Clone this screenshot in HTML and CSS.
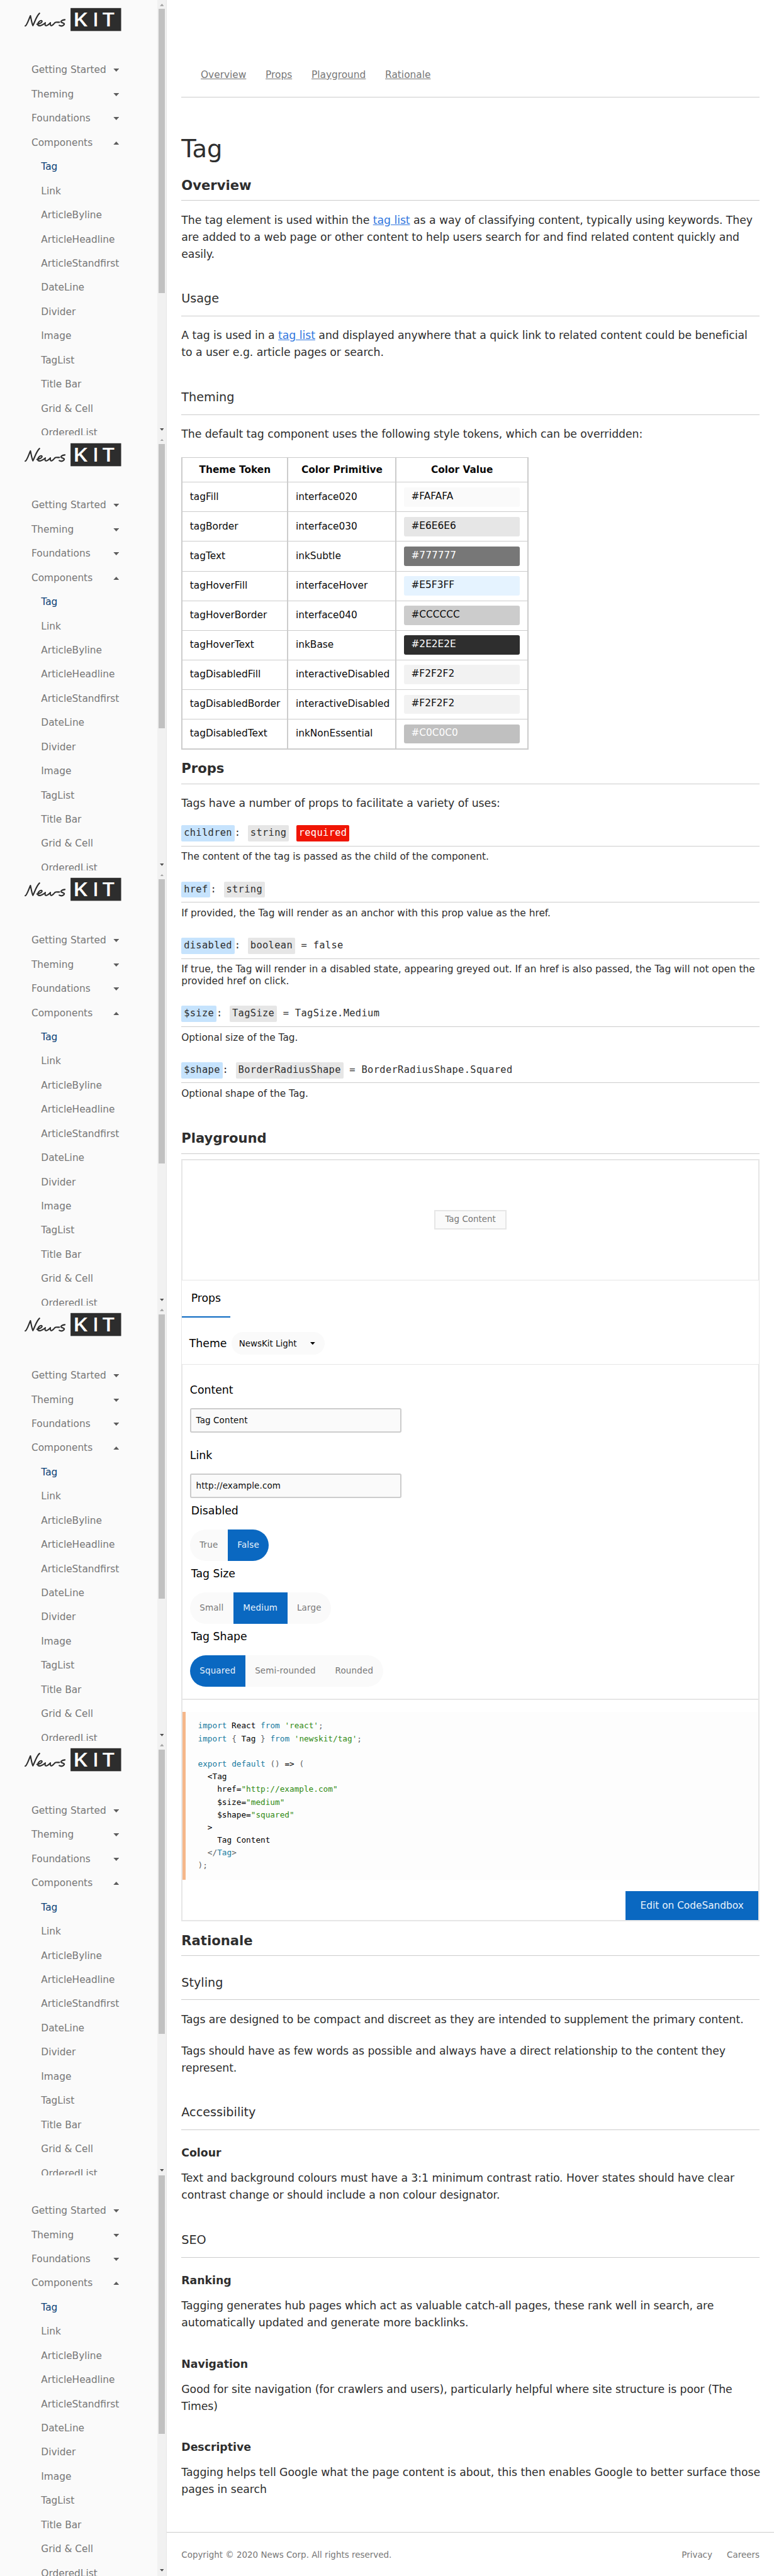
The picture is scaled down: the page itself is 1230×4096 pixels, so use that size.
FILE: index.html
```html
<!DOCTYPE html>
<html lang="en">
<head>
<meta charset="utf-8">
<title>Tag | NewsKit</title>
<link rel="stylesheet" href="styles.css">
</head>
<body>
<div class="page">
  <aside class="sidebar" id="sidebar"></aside>

  <div class="content">
    <main class="main">
      <nav class="anchors">
        <a>Overview</a><a>Props</a><a>Playground</a><a>Rationale</a>
      </nav>

      <h1 class="title">Tag</h1>

      <h2 class="h2 first">Overview</h2>
      <p class="para">The tag element is used within the <a class="link">tag list</a> as a way of classifying content, typically using keywords. They are added to a web page or other content to help users search for and find related content quickly and easily.</p>

      <h3 class="h3">Usage</h3>
      <p class="para">A tag is used in a <a class="link">tag list</a> and displayed anywhere that a quick link to related content could be beneficial to a user e.g. article pages or search.</p>

      <h3 class="h3">Theming</h3>
      <p class="para">The default tag component uses the following style tokens, which can be overridden:</p>

      <table class="tokens">
        <thead>
          <tr><th class="c1">Theme Token</th><th class="c2">Color Primitive</th><th class="c3">Color Value</th></tr>
        </thead>
        <tbody>
          <tr><td>tagFill</td><td>interface020</td><td><div class="swatch s-fafafa">#FAFAFA</div></td></tr>
          <tr><td>tagBorder</td><td>interface030</td><td><div class="swatch s-e6e6e6">#E6E6E6</div></td></tr>
          <tr><td>tagText</td><td>inkSubtle</td><td><div class="swatch s-777777">#777777</div></td></tr>
          <tr><td>tagHoverFill</td><td>interfaceHover</td><td><div class="swatch s-e5f3ff">#E5F3FF</div></td></tr>
          <tr><td>tagHoverBorder</td><td>interface040</td><td><div class="swatch s-cccccc">#CCCCCC</div></td></tr>
          <tr><td>tagHoverText</td><td>inkBase</td><td><div class="swatch s-2e2e2e">#2E2E2E</div></td></tr>
          <tr><td>tagDisabledFill</td><td>interactiveDisabled</td><td><div class="swatch s-f2f2f2">#F2F2F2</div></td></tr>
          <tr><td>tagDisabledBorder</td><td>interactiveDisabled</td><td><div class="swatch s-f2f2f2">#F2F2F2</div></td></tr>
          <tr><td>tagDisabledText</td><td>inkNonEssential</td><td><div class="swatch s-c0c0c0">#C0C0C0</div></td></tr>
        </tbody>
      </table>

      <h2 class="h2">Props</h2>
      <p class="para">Tags have a number of props to facilitate a variety of uses:</p>

      <div class="props">
        <section class="prop">
          <div class="prop-title"><span class="chip name">children</span>: <span class="chip type">string</span> <span class="chip required">required</span></div>
          <p class="desc">The content of the tag is passed as the child of the component.</p>
        </section>
        <section class="prop">
          <div class="prop-title"><span class="chip name">href</span>: <span class="chip type">string</span></div>
          <p class="desc">If provided, the Tag will render as an anchor with this prop value as the href.</p>
        </section>
        <section class="prop">
          <div class="prop-title"><span class="chip name">disabled</span>: <span class="chip type">boolean</span> = false</div>
          <p class="desc">If true, the Tag will render in a disabled state, appearing greyed out. If an href is also passed, the Tag will not open the provided href on click.</p>
        </section>
        <section class="prop">
          <div class="prop-title"><span class="chip name">$size</span>: <span class="chip type">TagSize</span> = TagSize.Medium</div>
          <p class="desc">Optional size of the Tag.</p>
        </section>
        <section class="prop">
          <div class="prop-title"><span class="chip name">$shape</span>: <span class="chip type">BorderRadiusShape</span> = BorderRadiusShape.Squared</div>
          <p class="desc">Optional shape of the Tag.</p>
        </section>
      </div>

      <h2 class="h2 after-props">Playground</h2>
      <div class="playground">
        <div class="stage"><span class="tag">Tag Content</span></div>
        <div class="controls">
          <div class="tab">Props</div>
          <div class="theme">
            <span class="label">Theme</span>
            <span class="select">NewsKit Light
              <svg class="caret" viewBox="0 0 8 4.5"><path d="M0 0h8L4 4.5z"/></svg>
            </span>
          </div>
        </div>
        <div class="form">
          <div class="label">Content</div>
          <div class="input">Tag Content</div>
          <div class="label second">Link</div>
          <div class="input">http://example.com</div>
          <div class="label inset">Disabled</div>
          <div class="group"><span class="opt">True</span><span class="opt on">False</span></div>
          <div class="label inset">Tag Size</div>
          <div class="group"><span class="opt">Small</span><span class="opt on">Medium</span><span class="opt">Large</span></div>
          <div class="label inset">Tag Shape</div>
          <div class="group"><span class="opt on">Squared</span><span class="opt">Semi-rounded</span><span class="opt">Rounded</span></div>
        </div>
        <div class="source">
<pre class="code"><span class="k">import</span> React <span class="k">from</span> <span class="s">'react'</span><span class="p">;</span>
<span class="k">import</span> <span class="p">{</span> Tag <span class="p">}</span> <span class="k">from</span> <span class="s">'newskit/tag'</span><span class="p">;</span>

<span class="k">export</span> <span class="k">default</span> <span class="p">()</span> =&gt; <span class="p">(</span>
  &lt;Tag
    href=<span class="s">"http://example.com"</span>
    $size=<span class="s">"medium"</span>
    $shape=<span class="s">"squared"</span>
  &gt;
    Tag Content
  <span class="p">&lt;/</span><span class="k">Tag</span><span class="p">&gt;</span>
<span class="p">);</span></pre>
          <div class="actions"><a class="button">Edit on CodeSandbox</a></div>
        </div>
      </div>

      <h2 class="h2">Rationale</h2>
      <h3 class="h3 close">Styling</h3>
      <p class="para">Tags are designed to be compact and discreet as they are intended to supplement the primary content.</p>
      <p class="para next">Tags should have as few words as possible and always have a direct relationship to the content they represent.</p>

      <h3 class="h3">Accessibility</h3>
      <h4 class="h4 close">Colour</h4>
      <p class="para sub">Text and background colours must have a 3:1 minimum contrast ratio. Hover states should have clear contrast change or should include a non colour designator.</p>

      <h3 class="h3">SEO</h3>
      <h4 class="h4 close">Ranking</h4>
      <p class="para sub">Tagging generates hub pages which act as valuable catch-all pages, these rank well in search, are automatically updated and generate more backlinks.</p>
      <h4 class="h4">Navigation</h4>
      <p class="para sub">Good for site navigation (for crawlers and users), particularly helpful where site structure is poor (The Times)</p>
      <h4 class="h4">Descriptive</h4>
      <p class="para sub wide">Tagging helps tell Google what the page content is about, this then enables Google to better surface those pages in search</p>
    </main>

    <footer class="footer">
      <span>Copyright © 2020 News Corp. All rights reserved.</span>
      <span class="footer-links"><a>Privacy</a><a>Careers</a></span>
    </footer>
  </div>
</div>
<script src="sidebar.js"></script>
</body>
</html>
```
FILE: styles.css
```css
* { box-sizing: border-box; }

:root {
  --thick: 2.6px;
  --rule: #cccccc;
  --edge: #e6e6e6;
  --ink: #2e2e2e;
  --subtle: #777777;
  --primary: #0a68c1;
}

html { overflow: hidden; }

body {
  margin: 0;
  zoom: 0.9609375;
  background: #fff;
  color: var(--ink);
  font-family: "DejaVu Sans", sans-serif;
  font-size: 16px;
}

h1, h2, h3, h4, p, pre { margin: 0; }

.page { display: flex; width: 1280px; height: 4262px; overflow: hidden; }

/* Sidebar */
.sidebar { width: 276px; flex: none; }
.pane {
  display: flex;
  height: 720px;
  overflow: hidden;
  background: #fafafa;
  border-right: 1px solid var(--edge);
}
.pane.tail { height: 662px; align-items: flex-end; }
.pane-nav { width: 260px; height: 720px; padding: 8px 0 0 34px; overflow: hidden; flex: none; }
.logo { display: block; width: 172px; height: 48px; margin-bottom: 40px; }
.logo text { font-family: "Open Sans", sans-serif; font-weight: 600; font-size: 98px; fill: #fff; }
.row {
  display: flex;
  align-items: center;
  justify-content: space-between;
  width: 144px;
  height: 40px;
  margin-left: 18px;
  color: var(--subtle);
  white-space: nowrap;
}
.row.child { margin-left: 34px; }
.row.active { color: #0a3f75; }
.row svg { width: 10px; height: 5.2px; fill: #5c5c5c; flex: none; margin-right: -1px; margin-top: 1px; }
.bar {
  display: flex;
  flex-direction: column;
  align-items: center;
  width: 15px;
  height: 720px;
  flex: none;
  padding: 6px 0;
  background: #f1f1f1;
}
.bar svg { width: 7px; height: 4px; }
.bar .up { fill: #a3a3a3; }
.bar .down { fill: #505050; margin-top: auto; margin-bottom: 1px; }
.thumb { width: 11px; height: 470px; margin-top: 5px; background: #c1c1c1; }

/* Main column */
.content { flex: 1; display: flex; flex-direction: column; }
.main { width: 980px; padding: 0 0 56px 24px; }
.main > * { width: 956px; }

.anchors {
  display: flex;
  gap: 32px;
  height: 161.4px;
  padding: 114px 0 0 32px;
  border-bottom: 1px solid var(--rule);
  color: var(--subtle);
  line-height: 20px;
}
.anchors a, .link { text-decoration: underline; }
.title { margin-top: 61px; font-weight: 400; font-size: 40px; line-height: 48px; }

.h2 {
  margin-top: 18px;
  padding-bottom: 10px;
  border-bottom: 1px solid var(--rule);
  font-size: 22px;
  line-height: 28px;
}
.h2.first { margin-top: 23px; }
.h2.after-props { margin-top: 50px; }
.h3 {
  margin-top: 46.6px;
  padding-bottom: 13.4px;
  border-bottom: 1px solid var(--rule);
  font-weight: 400;
  font-size: 20px;
  line-height: 28px;
}
.h3.close { margin-top: 30.6px; }
.h4 { margin-top: 40px; font-size: 18px; line-height: 28px; }
.h4.close { margin-top: 24px; }
.para { margin-top: 18px; font-size: 18px; line-height: 28px; letter-spacing: -0.055px; }
.para.next { margin-top: 24px; }
.para.sub { margin-top: 14px; }
.main > .para.wide { width: 966px; }
.link { color: #3277de; }

/* Token table */
.main > .tokens {
  width: 574px;
  margin-top: 24px;
  table-layout: fixed;
  border-spacing: 0;
  border-left: var(--thick) solid var(--rule);
  border-top: 1px solid var(--rule);
  border-bottom: 1px solid var(--rule);
  color: #0a0a0a;
}
.tokens th, .tokens td {
  padding: 0 12px;
  border-right: var(--thick) solid var(--rule);
  border-bottom: 1px solid var(--rule);
  text-align: left;
  line-height: 20px;
}
.tokens th { height: 41px; text-align: center; }
.tokens td { height: 49px; }
.c1 { width: 175px; }
.c2 { width: 179px; }
.c3 { width: 218px; }
.swatch { height: 32px; padding: 5px 12px 7px; border-radius: 3px; }
.s-fafafa { background: #fafafa; }
.s-e6e6e6 { background: #e6e6e6; }
.s-777777 { background: #777777; color: #fff; }
.s-e5f3ff { background: #e5f3ff; }
.s-cccccc { background: #cccccc; }
.s-2e2e2e { background: #2e2e2e; color: #fff; }
.s-f2f2f2 { background: #f2f2f2; }
.s-c0c0c0 { background: #c0c0c0; color: #fff; }

/* Prop list */
.props { display: flex; flex-direction: column; gap: 30px; margin-top: 22px; }
.prop-title {
  height: 35px;
  border-bottom: 1px solid var(--rule);
  font-family: "DejaVu Sans Mono", monospace;
  letter-spacing: 0.37px;
  line-height: 27px;
  white-space: pre;
}
.chip { display: inline-block; height: 27px; padding: 0 4px; border-radius: 2px; }
.chip.name { background: #c6e3fd; }
.chip.type { background: #e6e6e6; margin-left: 2px; }
.chip.required { background: #f01504; color: #fff; margin-left: 2px; }
.desc { margin-top: 8px; line-height: 20px; }

/* Playground */
.playground { margin-top: 8px; color: #0a0a0a; }
.stage {
  display: flex;
  align-items: center;
  justify-content: center;
  height: 201px;
  border: var(--thick) solid var(--edge);
  border-bottom-width: 1px;
}
.tag {
  width: 120px;
  height: 32px;
  border: var(--thick) solid var(--edge);
  background: #fafafa;
  color: var(--subtle);
  font-size: 14px;
  line-height: 28px;
  text-align: center;
}
.controls { height: 140px; border: 1px solid var(--edge); border-top: 0; }
.tab {
  width: 80px;
  height: 62px;
  padding: 16px 0 0 15px;
  border-bottom: var(--thick) solid var(--primary);
  color: #000;
  font-size: 18px;
  line-height: 28px;
}
.theme { display: flex; align-items: center; gap: 8px; padding: 24px 0 0 12px; }
.label { color: #000; font-size: 18px; line-height: 28px; }
.select {
  display: flex;
  align-items: center;
  justify-content: space-between;
  width: 154px;
  height: 37px;
  padding: 0 16px 0 12px;
  border-radius: 19px;
  background: #fafafa;
  font-size: 14px;
}
.caret { width: 8px; height: 4.5px; }
.form { padding: 28px 0 20px 12px; border-left: var(--thick) solid var(--edge); border-right: var(--thick) solid var(--edge); }
.label.second { margin-top: 24px; }
.label.inset { margin-top: 8px; padding-left: 2px; }
.input {
  width: 350px;
  height: 40px;
  margin-top: 16px;
  padding-left: 8px;
  border: var(--thick) solid var(--rule);
  border-radius: 3px;
  background: #fafafa;
  font-size: 14px;
  letter-spacing: 0.15px;
  line-height: 37px;
}
.group {
  display: flex;
  width: max-content;
  height: 52px;
  margin-top: 16px;
  border-radius: 26px;
  overflow: hidden;
  background: #fafafa;
  color: var(--subtle);
  font-size: 14px;
  letter-spacing: 0.2px;
  line-height: 52px;
}
.opt { padding: 0 16px; }
.opt.on { background: var(--primary); color: #e9f2fb; }
.source { padding-top: 20px; border: var(--thick) solid var(--edge); }
.code {
  height: 278px;
  padding: 13px 0 0 20px;
  border-left: 5.3px solid #f5b78a;
  background: #fdfdfd;
  color: #000;
  font-family: "DejaVu Sans Mono", monospace;
  font-size: 13.25px;
  line-height: 21px;
}
.k { color: #177ba0; }
.s { color: #2f8a11; }
.p { color: #5f6364; }
.actions { display: flex; justify-content: flex-end; margin-top: 19px; }
.button { padding: 0 24px; background: var(--primary); color: #e9f2fb; line-height: 48px; }

/* Footer */
.footer {
  display: flex;
  justify-content: space-between;
  height: 73px;
  padding: 29px 24px 0;
  border-top: 1px solid var(--rule);
  color: var(--subtle);
  font-size: 14px;
  line-height: 16px;
}
.footer-links { display: flex; gap: 24px; }
```
FILE: sidebar.js
```js
const sections = ['Getting Started', 'Theming', 'Foundations', 'Components'];
const components = ['Tag', 'Link', 'ArticleByline', 'ArticleHeadline', 'ArticleStandfirst',
  'DateLine', 'Divider', 'Image', 'TagList', 'Title Bar', 'Grid & Cell', 'OrderedList'];

const down = '<svg viewBox="0 0 9 5"><path d="M0 0h9L4.5 5z"/></svg>';
const up = '<svg viewBox="0 0 9 5"><path d="M0 5h9L4.5 0z"/></svg>';

const logo = `
<svg class="logo" viewBox="0 0 516 144">
  <g fill="none" stroke="#2d2d2d" stroke-width="6.5" stroke-linecap="round" stroke-linejoin="round">
    <path d="M22 104C30 102 36 80 48 53C52 70 54 88 60 102C70 84 78 54 93 41"/>
    <path d="M80 95C98 92 110 84 104 78C96 75 83 88 84 97C88 108 106 102 122 88C118 98 121 104 128 102C138 99 144 90 147 88C145 98 148 104 154 102C162 98 166 92 170 87C176 83 184 87 192 85"/>
    <path d="M219 73C206 74 195 80 202 86C212 90 220 92 214 98C208 104 198 105 191 101"/>
  </g>
  <rect x="247" y="15" width="251" height="114" fill="#2d2d2d"/>
  <text x="259" y="107" textLength="72" lengthAdjust="spacingAndGlyphs">K</text>
  <text x="357" y="107">I</text>
  <text x="405" y="107" textLength="60" lengthAdjust="spacingAndGlyphs">T</text>
</svg>`;

function pane(tail) {
  const rows = sections.map((s, i) => `<div class="row">${s}${i === 3 ? up : down}</div>`).join('') +
    components.map((c, i) => `<div class="row child${i ? '' : ' active'}">${c.replace('&', '&amp;')}</div>`).join('');
  return `<div class="pane${tail ? ' tail' : ''}">
    <div class="pane-nav">${logo}${rows}</div>
    <div class="bar">
      <svg class="up" viewBox="0 0 7 4"><path d="M0 4h7L3.5 0z"/></svg>
      <div class="thumb"></div>
      <svg class="down" viewBox="0 0 7 4"><path d="M0 0h7L3.5 4z"/></svg>
    </div>
  </div>`;
}

document.getElementById('sidebar').innerHTML =
  [0, 1, 2, 3, 4].map(() => pane(false)).join('') + pane(true);
```
